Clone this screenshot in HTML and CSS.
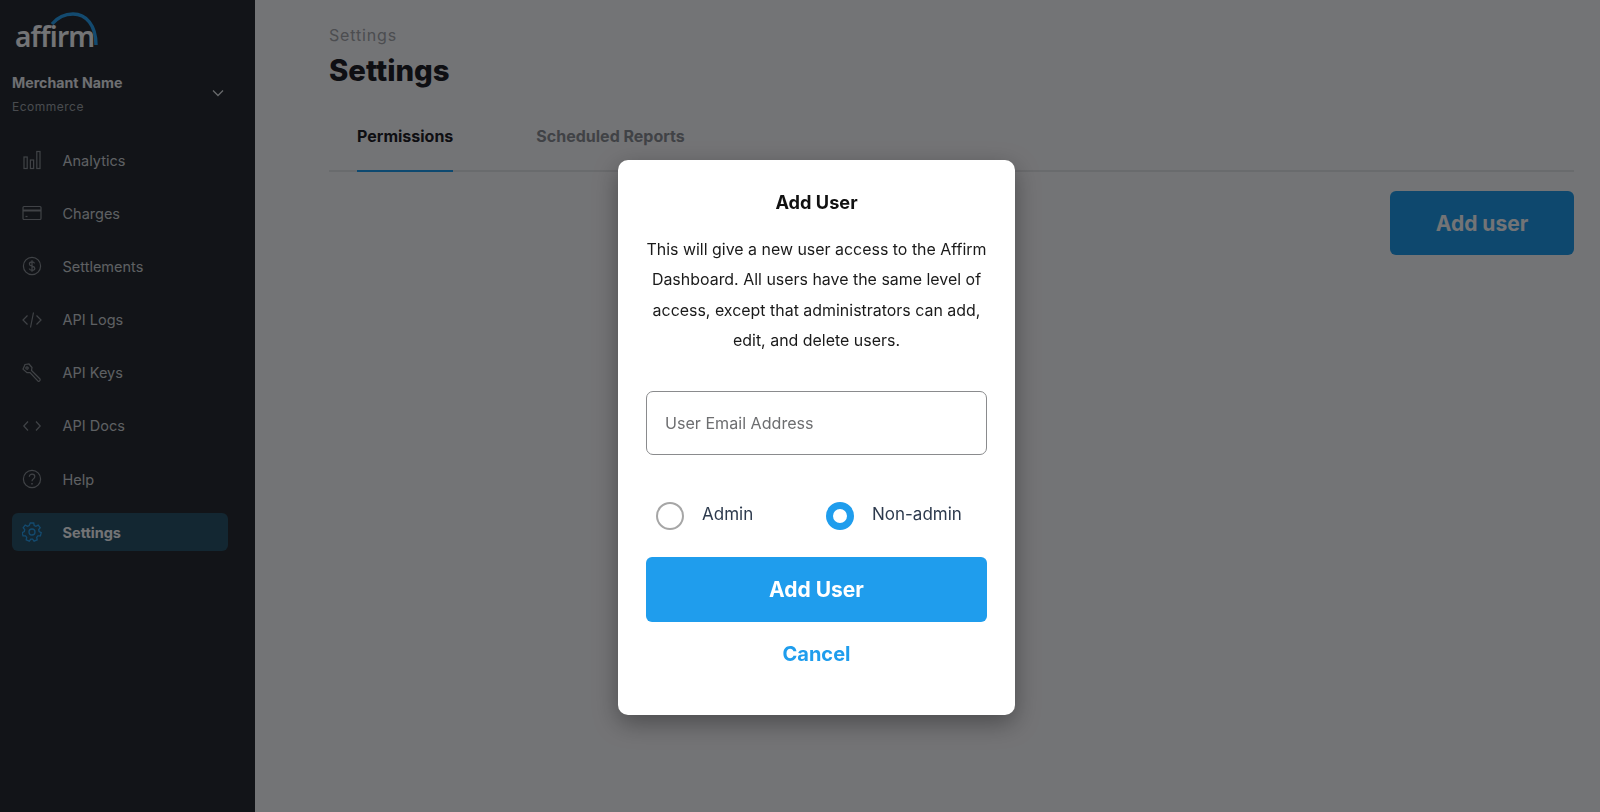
FILE: index.html
```html
<!DOCTYPE html>
<html lang="en">
<head>
    <meta charset="UTF-8">
    <meta name="viewport" content="width=device-width, initial-scale=1.0">
    <title>Settings</title>
    <link rel="stylesheet" href="styles.css">
</head>
<body>

<div class="app">
    <aside class="sidebar">
        <div class="logo">
            <span class="logo-text">affirm</span>
            <svg class="logo-arc" width="52" height="36" viewBox="0 0 52 36" fill="none">
                <path d="M3 12C9 5 16 2 24 2c13 0 23 11 23 31" stroke="#2aa3f0" stroke-width="3.4"/>
            </svg>
        </div>

        <div class="merchant">
            <div>
                <div class="merchant-name">Merchant Name</div>
                <div class="merchant-type">Ecommerce</div>
            </div>
            <svg class="chevron" width="14" height="10" viewBox="0 0 14 10" fill="none">
                <path d="M2 2.500l5 5 5-5" stroke="#e6e7e8" stroke-width="1.300"/>
            </svg>
        </div>

        <nav class="nav">
            <a class="nav-item">
                <svg width="20" height="20" viewBox="0 0 20 20" fill="none" stroke="#8e9195" stroke-width="1.200">
                    <rect x="2" y="7" width="3.200" height="11.500"/><rect x="8.400" y="10" width="3.200" height="8.500"/><rect x="14.800" y="1.500" width="3.200" height="17"/>
                </svg>
                <span>Analytics</span>
            </a>
            <a class="nav-item">
                <svg width="20" height="20" viewBox="0 0 20 20" fill="none" stroke="#8e9195" stroke-width="1.200">
                    <rect x="1" y="3.500" width="18" height="13" rx="1"/><path d="M1 7.500h18" stroke-width="2"/><path d="M3.500 13.500h2"/>
                </svg>
                <span>Charges</span>
            </a>
            <a class="nav-item">
                <svg width="20" height="20" viewBox="0 0 20 20" fill="none" stroke="#8e9195" stroke-width="1.200">
                    <circle cx="10" cy="10" r="8.600"/><path d="M12.600 7.400c-.4-1-1.400-1.600-2.600-1.600-1.500 0-2.600.8-2.600 2.100 0 2.900 5.400 1.400 5.400 4.300 0 1.300-1.200 2.100-2.800 2.100-1.300 0-2.400-.6-2.800-1.700M10 4.200v11.600"/>
                </svg>
                <span>Settlements</span>
            </a>
            <a class="nav-item">
                <svg width="20" height="20" viewBox="0 0 20 20" fill="none" stroke="#8e9195" stroke-width="1.200">
                    <path d="M5.500 5.500L1 10l4.500 4.500M14.500 5.500L19 10l-4.500 4.500M11.500 2.500l-3 15"/>
                </svg>
                <span>API Logs</span>
            </a>
            <a class="nav-item">
                <svg width="20" height="20" viewBox="0 0 20 20" fill="none" stroke="#8e9195" stroke-width="1.200">
                    <path d="M3 1.500l4-.5 3 3.500-.5 3 8.500 8.500c.6.800-.2 2.500-1.700 2.500l-8.300-9-3 .2L1 6.200z"/><circle cx="5" cy="5" r="1.200"/>
                </svg>
                <span>API Keys</span>
            </a>
            <a class="nav-item">
                <svg width="20" height="20" viewBox="0 0 20 20" fill="none" stroke="#8e9195" stroke-width="1.200">
                    <path d="M6 5.500L1.800 10 6 14.500M14 5.500l4.200 4.500-4.200 4.500"/>
                </svg>
                <span>API Docs</span>
            </a>
            <a class="nav-item">
                <svg width="20" height="20" viewBox="0 0 20 20" fill="none" stroke="#8e9195" stroke-width="1.200">
                    <circle cx="10" cy="10" r="8.600"/><path d="M7.300 7.800c0-1.600 1.200-2.600 2.800-2.600 1.500 0 2.700 1 2.700 2.400 0 2.300-2.800 2.300-2.800 4.600"/><path d="M10 14v1.400" stroke-width="1.500"/>
                </svg>
                <span>Help</span>
            </a>
            <a class="nav-item active">
                <svg width="20" height="20" viewBox="0 0 20 20" fill="none" stroke="#2aa3f0" stroke-width="1.300">
                    <circle cx="10" cy="10" r="3"/><path d="M8.300 1h3.400l.5 2.500 1.700.8 2.300-1.200 2 2.600-1.500 2 .4 1.900 2.100 1-.8 3.200-2.500.1-1.200 1.500.5 2.500-3.100 1.300-1.500-2h-1.800l-1.500 2-3.100-1.300.5-2.500-1.200-1.500-2.500-.1-.8-3.200 2.100-1 .4-1.900-1.500-2 2-2.600 2.300 1.200 1.700-.8z"/>
                </svg>
                <span>Settings</span>
            </a>
        </nav>
    </aside>

    <main class="main">
        <div class="breadcrumb">Settings</div>
        <h1 class="page-title">Settings</h1>
        <div class="tabs">
            <a class="tab active">Permissions</a>
            <a class="tab">Scheduled Reports</a>
        </div>
        <div class="actions">
            <button class="add-user-btn">Add user</button>
        </div>
    </main>
</div>

<div class="overlay">
    <div class="modal">
        <h3 class="modal-title">Add User</h3>
        <p class="modal-text">This will give a new user access to the Affirm Dashboard. All users have the same level of access, except that administrators can add, edit, and delete users.</p>
        <div class="email-field">User Email Address</div>
        <div class="radios">
            <label class="radio"><span class="radio-mark"></span>Admin</label>
            <label class="radio"><span class="radio-mark checked"></span>Non-admin</label>
        </div>
        <button class="submit-btn">Add User</button>
        <a class="cancel">Cancel</a>
    </div>
</div>

</body>
</html>
```

FILE: styles.css
```css
body {
    font-family: Inter, "Liberation Sans", sans-serif;
    margin: 0;
    padding: 0;
    height: 812px;
    overflow: hidden;
    background-color: #fff;
    color: #111;
}
.app {
    display: flex;
    height: 812px;
}

/* sidebar, colours here are before the overlay darkens them */
.sidebar {
    width: 255px;
    flex-shrink: 0;
    background-color: #282c2f;
    padding: 0 27px 0 12px;
    box-sizing: border-box;
}
.logo {
    position: relative;
    height: 67px;
}
.logo-text {
    position: absolute;
    left: 3px;
    top: 17px;
    font-family: "Noto Sans", sans-serif;
    font-size: 28px;
    font-weight: 600;
    letter-spacing: -0.8px;
    color: #fff;
}
.logo-arc {
    position: absolute;
    left: 37px;
    top: 12px;
}
.merchant {
    display: flex;
    justify-content: space-between;
    align-items: center;
    padding: 7px 3px 0 0;
}
.merchant-name {
    font-size: 14.2px;
    font-weight: 700;
    color: #f4f4f5;
    line-height: 18px;
}
.merchant-type {
    font-size: 12px;
    color: #a2a5a8;
    letter-spacing: 0.5px;
    line-height: 18px;
    margin-top: 6px;
}
.chevron {
    margin-bottom: 4px;
}
.nav {
    margin-top: 25px;
}
.nav-item {
    display: flex;
    align-items: center;
    gap: 20.5px;
    height: 38px;
    margin-bottom: 15.2px;
    padding-left: 10px;
    border-radius: 6px;
    font-size: 14.5px;
    color: #d0d2d4;
}
.nav-item.active {
    background-color: #2b5468;
    color: #fff;
    font-weight: 700;
}

/* main content */
.main {
    flex: 1;
    padding: 24px 26px 0 74px;
}
.breadcrumb {
    font-size: 16px;
    line-height: 22px;
    letter-spacing: 0.85px;
    color: #a8a9ab;
}
.page-title {
    font-size: 29.3px;
    line-height: 38px;
    font-weight: 800;
    margin: 6px 0 0;
    color: #1f2124;
}
.tabs {
    display: flex;
    gap: 83px;
    margin-top: 26px;
    padding-left: 28px;
    border-bottom: 2px solid #e9eaeb;
    height: 54px;
}
.tab {
    font-size: 16px;
    font-weight: 700;
    line-height: 22px;
    padding-top: 9px;
    color: #8f9194;
    height: 45px;
}
.tab.active {
    color: #1f2124;
    border-bottom: 2px solid #1da0f2;
}
.actions {
    display: flex;
    justify-content: flex-end;
    margin-top: 19px;
}
.add-user-btn {
    width: 184px;
    height: 64px;
    border: none;
    border-radius: 6px;
    background-color: #1f9ded;
    color: #fff;
    font-family: inherit;
    font-size: 21px;
    font-weight: 700;
}

/* modal */
.overlay {
    position: fixed;
    inset: 0;
    background-color: rgba(0, 2, 5, 0.55);
    padding: 160px 0 0 618px;
}
.modal {
    width: 397px;
    height: 555px;
    box-sizing: border-box;
    padding: 28px 28px 0;
    background-color: #fff;
    border-radius: 10px;
    box-shadow: 0 8px 24px rgba(0, 0, 0, 0.35);
    text-align: center;
}
.modal-title {
    margin: 0;
    font-size: 18.2px;
    line-height: 28px;
    font-weight: 700;
    color: #111;
}
.modal-text {
    margin: 19px -3px 0;
    font-size: 15.95px;
    line-height: 30.3px;
    color: #1a1a1a;
}
.email-field {
    margin-top: 35px;
    height: 64px;
    line-height: 62px;
    box-sizing: border-box;
    border: 1px solid #8a8b8d;
    border-radius: 7px;
    padding-left: 18px;
    text-align: left;
    font-size: 16.1px;
    color: #6d6e70;
}
.radios {
    display: flex;
    margin-top: 47px;
    padding-left: 10px;
}
.radio {
    display: flex;
    flex: none;
    align-items: flex-start;
    gap: 18px;
    width: 170px;
    font-size: 17px;
    line-height: 24px;
    color: #2d3a4d;
}
.radio-mark {
    width: 28px;
    height: 28px;
    box-sizing: border-box;
    border: 2px solid #a6a6a6;
    border-radius: 50%;
}
.radio-mark.checked {
    border: 7px solid #1f9ded;
}
.submit-btn {
    display: block;
    width: 100%;
    height: 65px;
    margin-top: 27px;
    border: none;
    border-radius: 6px;
    background-color: #1f9ded;
    color: #fff;
    font-family: inherit;
    font-size: 21px;
    font-weight: 700;
}
.cancel {
    display: block;
    margin-top: 18px;
    font-size: 20px;
    line-height: 28px;
    font-weight: 700;
    color: #1f9ded;
}
```
